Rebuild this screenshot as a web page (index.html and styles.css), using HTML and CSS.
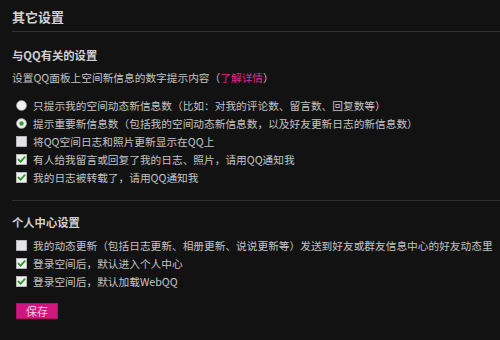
FILE: index.html
```html
<!DOCTYPE html>
<html lang="zh-CN">
<head>
<meta charset="utf-8">
<title>其它设置</title>
<link rel="stylesheet" href="styles.css">
</head>
<body>
<div class="page">
  <h1 class="title">其它设置</h1>

  <section class="section">
    <h2 class="sub">与QQ有关的设置</h2>
    <p class="desc">设置QQ面板上空间新信息的数字提示内容（<a class="link" href="#">了解详情</a>）</p>
    <ul class="opts">
      <li class="opt"><svg class="ctl" viewBox="0 0 12 12"><circle cx="6" cy="6" r="5.3" class="box"/></svg><span>只提示我的空间动态新信息数（比如：对我的评论数、留言数、回复数等）</span></li>
      <li class="opt"><svg class="ctl" viewBox="0 0 12 12"><circle cx="6" cy="6" r="5.3" class="box"/><circle cx="6" cy="6" r="2.4" class="dot"/></svg><span>提示重要新信息数（包括我的空间动态新信息数，以及好友更新日志的新信息数）</span></li>
      <li class="opt"><svg class="ctl" viewBox="0 0 12 12"><rect x="0.5" y="0.5" width="11" height="11" class="box sq"/></svg><span>将QQ空间日志和照片更新显示在QQ上</span></li>
      <li class="opt"><svg class="ctl" viewBox="0 0 12 12"><rect x="0.5" y="0.5" width="11" height="11" class="box"/><path d="M2.8 6.2 L5 8.4 L9.3 3.6" class="chk"/></svg><span>有人给我留言或回复了我的日志、照片，请用QQ通知我</span></li>
      <li class="opt"><svg class="ctl" viewBox="0 0 12 12"><rect x="0.5" y="0.5" width="11" height="11" class="box"/><path d="M2.8 6.2 L5 8.4 L9.3 3.6" class="chk"/></svg><span>我的日志被转载了，请用QQ通知我</span></li>
    </ul>
  </section>

  <section class="section second">
    <h2 class="sub">个人中心设置</h2>
    <ul class="opts tight">
      <li class="opt"><svg class="ctl" viewBox="0 0 12 12"><rect x="0.5" y="0.5" width="11" height="11" class="box sq"/></svg><span>我的动态更新（包括日志更新、相册更新、说说更新等）发送到好友或群友信息中心的好友动态里</span></li>
      <li class="opt"><svg class="ctl" viewBox="0 0 12 12"><rect x="0.5" y="0.5" width="11" height="11" class="box"/><path d="M2.8 6.2 L5 8.4 L9.3 3.6" class="chk"/></svg><span>登录空间后，默认进入个人中心</span></li>
      <li class="opt"><svg class="ctl" viewBox="0 0 12 12"><rect x="0.5" y="0.5" width="11" height="11" class="box"/><path d="M2.8 6.2 L5 8.4 L9.3 3.6" class="chk"/></svg><span>登录空间后，默认加载WebQQ</span></li>
    </ul>
    <button class="save" type="button">保存</button>
  </section>
</div>
</body>
</html>
```

FILE: styles.css
```css
html, body {
  margin: 0;
  padding: 0;
  background: #121212;
}
body {
  font-family: "Noto Sans CJK SC", "Noto Sans", sans-serif;
  color: #c4c4c4;
  font-size: 10.7px;
  width: 500px;
  height: 340px;
  overflow: hidden;
}
.page {
  padding-left: 12px;
}
.title {
  margin: 0;
  padding: 7px 0 4px;
  line-height: 20px;
  font-size: 13px;
  font-weight: bold;
  color: #d2d2d2;
  border-bottom: 1px solid #333;
}
.section {
  padding-top: 13px;
}
.second {
  margin-top: 14px;
  border-top: 1px solid #2e2e2e;
  padding-top: 11px;
}
.sub {
  margin: 0;
  font-size: 11.3px;
  font-weight: bold;
  line-height: 20px;
  color: #d0d0d0;
}
.desc {
  margin: 4px 0 0;
  line-height: 18px;
}
.link {
  color: #e0288c;
  text-decoration: none;
}
.opts {
  list-style: none;
  margin: 9px 0 0;
  padding: 0;
}
.opts.tight {
  margin-top: 4px;
}
.opt {
  display: flex;
  align-items: center;
  height: 18px;
  padding-left: 4px;
  gap: 6px;
  white-space: nowrap;
}
.ctl {
  width: 11px;
  height: 11px;
  flex: none;
}
.box {
  fill: #f0f0f0;
  stroke: #c8c8c8;
  stroke-width: 0.8;
}
.sq {
  fill: #e2e4ea;
}
.dot {
  fill: #3f9a3a;
}
.chk {
  fill: none;
  stroke: #2f9a2f;
  stroke-width: 2;
  stroke-linecap: square;
}
.save {
  display: block;
  margin: 13px 0 0 4px;
  width: 42px;
  height: 16px;
  padding: 0;
  border: 1px solid #b0106a;
  background: #d3167f;
  color: #f4cfe6;
  font-family: "Noto Sans CJK SC", sans-serif;
  font-size: 11px;
  line-height: 14px;
}
```
